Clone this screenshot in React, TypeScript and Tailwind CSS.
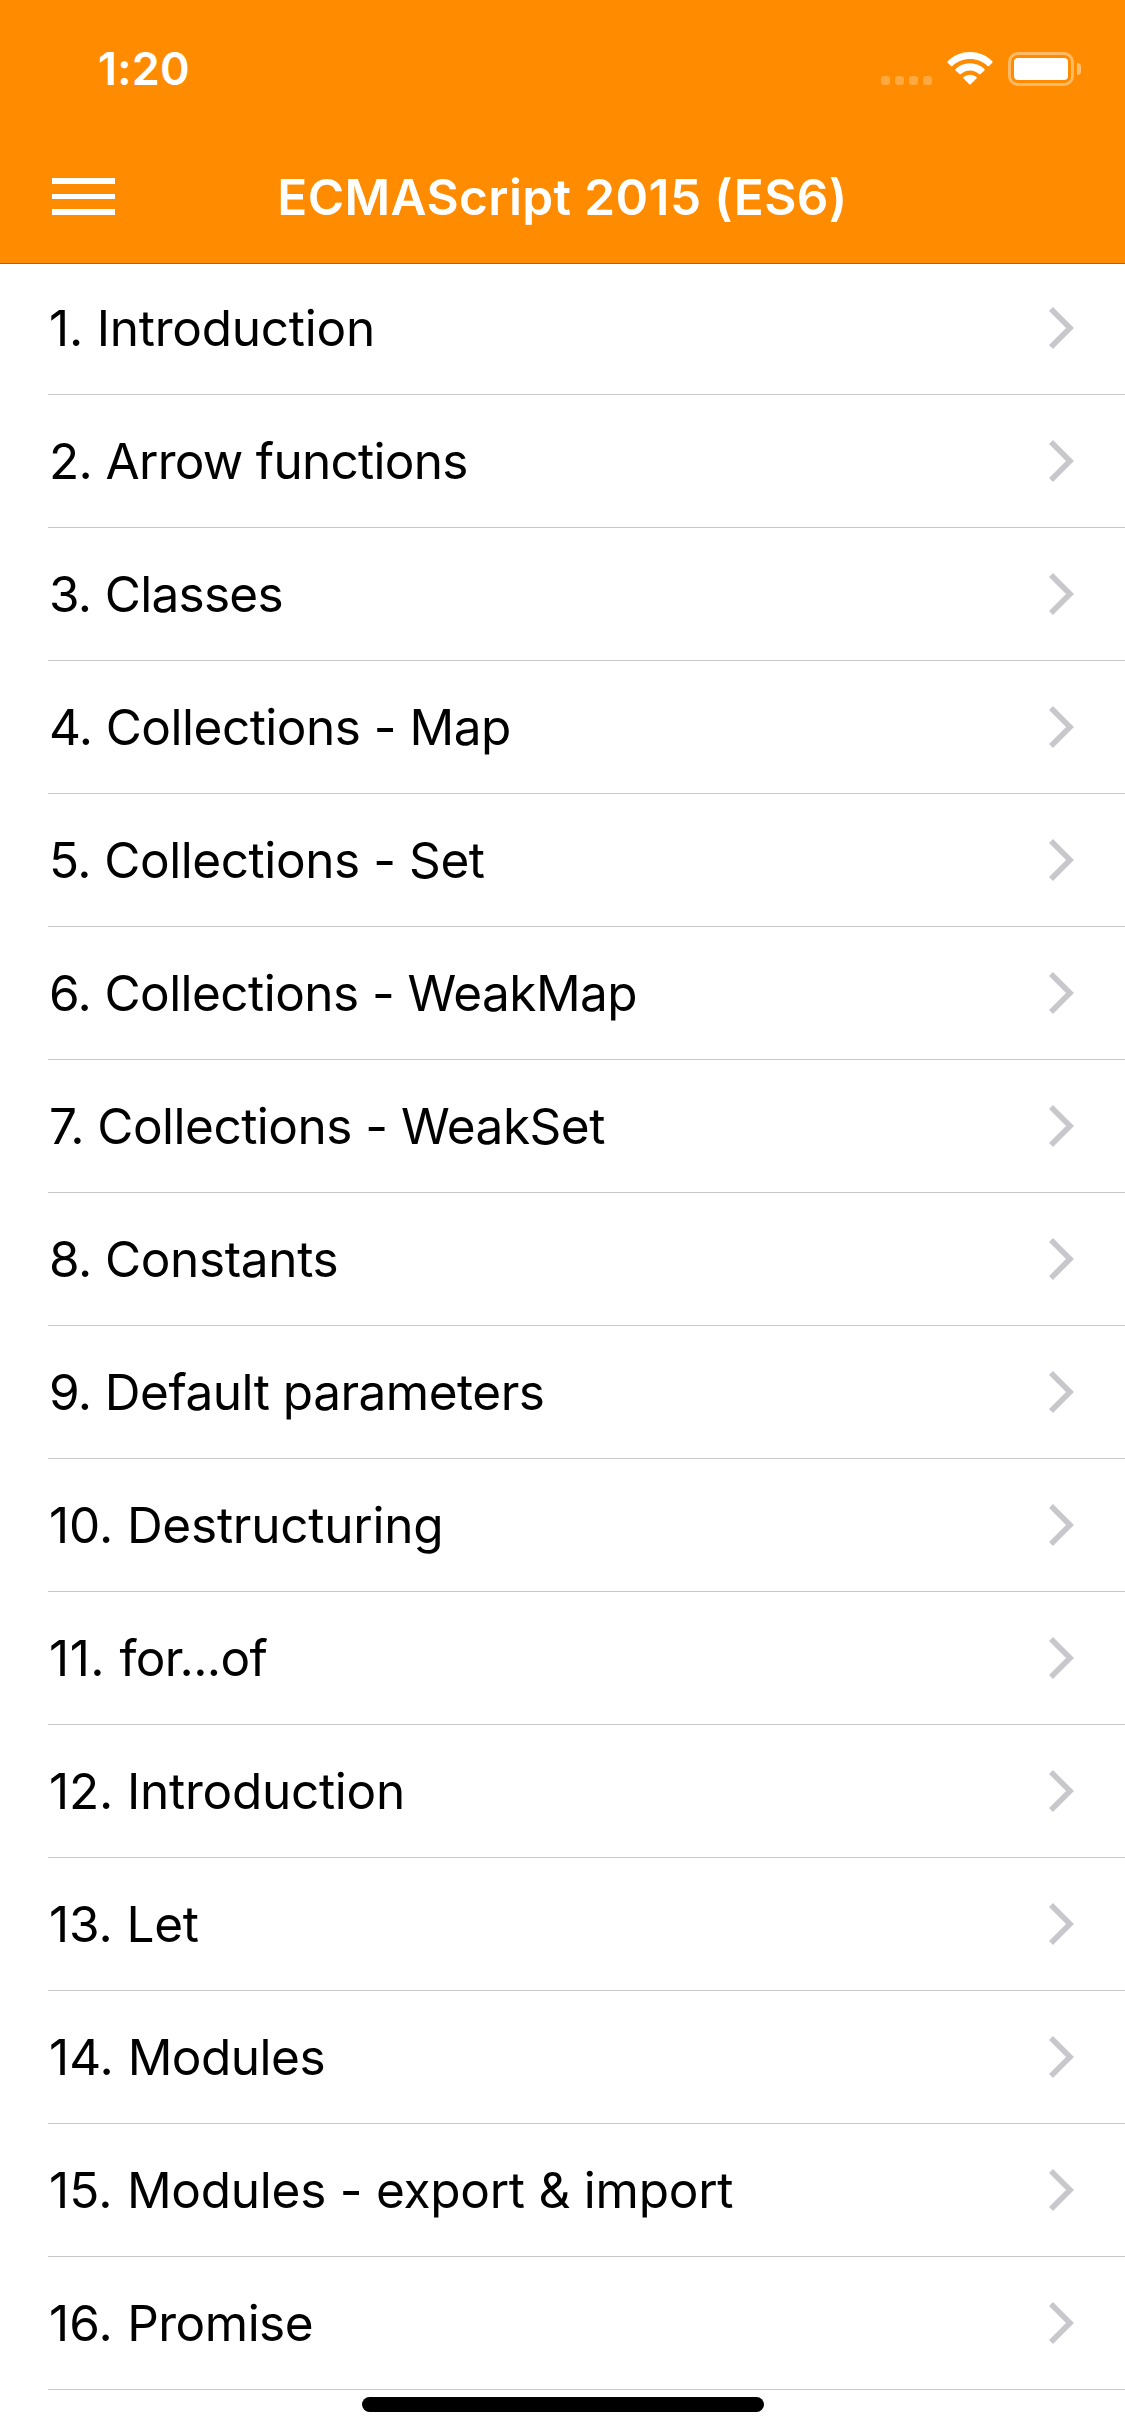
const topics = [
  { title: "Introduction", number: "tracking-[-0.2px]", text: "tracking-[-0.25px]" },
  { title: "Arrow functions", number: "tracking-[-0.6px]", text: "tracking-[-0.72px]" },
  { title: "Classes", number: "tracking-[-0.6px]", text: "tracking-[-0.75px]" },
  { title: "Collections - Map", number: "tracking-[-0.6px]", text: "tracking-[-0.5px]" },
  { title: "Collections - Set", number: "tracking-[-0.6px]", text: "tracking-[-0.42px]" },
  { title: "Collections - WeakMap", number: "tracking-[-0.6px]", text: "tracking-[-0.55px]" },
  { title: "Collections - WeakSet", number: "tracking-[-0.6px]", text: "tracking-[-0.5px]" },
  { title: "Constants", number: "tracking-[-0.6px]", text: "tracking-[-0.35px]" },
  { title: "Default parameters", number: "tracking-[-0.6px]", text: "tracking-[-0.5px]" },
  { title: "Destructuring", number: "tracking-[-0.1px]", text: "tracking-[-0.24px]" },
  { title: "for...of", number: "tracking-[0.5px]", text: "tracking-[-0.65px]" },
  { title: "Introduction", number: "tracking-[-0.1px]", text: "tracking-[-0.28px]" },
  { title: "Let", number: "tracking-[-0.1px]", text: "tracking-[-0.2px]" },
  { title: "Modules", number: "tracking-[0px]", text: "tracking-[-0.5px]" },
  { title: "Modules - export & import", number: "tracking-[0.2px]", text: "tracking-[-0.25px]" },
  { title: "Promise", number: "tracking-[0.2px]", text: "tracking-[-0.5px]" },
];

function Signal() {
  return (
    <div className="flex gap-[5px] pt-[24px]">
      <i className="size-[9px] rounded-[3px] bg-white/25" />
      <i className="size-[9px] rounded-[3px] bg-white/25" />
      <i className="size-[9px] rounded-[3px] bg-white/25" />
      <i className="size-[9px] rounded-[3px] bg-white/25" />
    </div>
  );
}

function Wifi() {
  return (
    <svg className="ml-[15px] h-[33px] w-[46px]" viewBox="0 0 46 33" fill="#fff">
      <path d="M23 0C32 0 39.500 3.400 45.300 9.200Q46 10 45.300 10.700L42 13.900Q41.300 14.500 40.600 13.900C35.700 9.300 29.700 7 23 7S10.300 9.300 5.400 13.900Q4.700 14.500 4 13.900L.7 10.700Q0 10 .7 9.200C6.500 3.400 14 0 23 0Z" />
      <path d="M23 11.200C28.700 11.200 33.600 13.300 37.400 17Q38.100 17.700 37.400 18.400L33.600 22.100Q32.900 22.700 32.200 22.100C29.700 19.800 26.600 18.400 23 18.400S16.300 19.800 13.800 22.100Q13.100 22.700 12.400 22.100L8.600 18.400Q7.900 17.700 8.600 17C12.400 13.300 17.300 11.200 23 11.200Z" />
      <path d="M23 22.700C25.600 22.700 27.800 23.600 29.500 25.100Q30.200 25.700 29.500 26.400L23.700 32.200Q23 32.900 22.300 32.200L16.500 26.400Q15.800 25.700 16.500 25.100C18.200 23.600 20.400 22.700 23 22.700Z" />
    </svg>
  );
}

function Battery() {
  return (
    <div className="ml-[15px] flex items-center gap-[3px]">
      <div className="h-[34px] w-[66px] rounded-[10px] border-3 border-white/40 p-[3px]">
        <div className="h-full rounded-[4px] bg-white" />
      </div>
      <div className="h-[12px] w-[4px] rounded-r-full bg-white/45" />
    </div>
  );
}

export default function App() {
  return (
    <div className="relative h-[2436px] w-[1125px] overflow-hidden bg-white font-['Inter',sans-serif] text-black [font-feature-settings:'calt'_0]">
      <header className="relative z-10 -mb-[2px] h-[264px] border-b border-[#b36200] bg-[#ff8c00] text-white">
        <div className="flex h-[132px] items-start justify-between pr-[44px] pl-[98px]">
          <span className="pt-[42px] text-[45px] leading-[54px] font-semibold tracking-[0.2px]">1:20</span>
          <div className="flex pt-[52px]">
            <Signal />
            <Wifi />
            <Battery />
          </div>
        </div>
        <div className="grid h-[129px] grid-cols-[115px_1fr_115px] items-center">
          <button aria-label="Menu" className="flex flex-col gap-[10px] pl-[52px]">
            <span className="h-[5.500px] w-[63px] bg-white" />
            <span className="h-[5.500px] w-[63px] bg-white" />
            <span className="h-[5.500px] w-[63px] bg-white" />
          </button>
          <h1 className="text-center text-[49.500px] leading-[60px] font-semibold tracking-[0.4px]">ECMAScript 2015 (ES6)</h1>
        </div>
      </header>
      <ul>
        {topics.map(({ title, number, text }, i) => (
          <li key={i} className="flex h-[133px] pl-[48px]">
            <div className="flex flex-1 items-center justify-between border-b border-[#c8c7cc] pr-[50px] pl-px">
              <span className="text-[49.500px] leading-[60px] whitespace-pre">
                <span className={number}>{`${i + 1}. `}</span>
                <span className={text}>{title}</span>
              </span>
              <svg className="h-[44px] w-[27px]" viewBox="0 0 27 44" fill="none" stroke="#c7c7cc" strokeWidth="5.600">
                <path d="M3 3L22 22L3 41" />
              </svg>
            </div>
          </li>
        ))}
      </ul>
      <div className="absolute top-[2397px] left-[362px] h-[15px] w-[402px] rounded-full bg-black" />
    </div>
  );
}
